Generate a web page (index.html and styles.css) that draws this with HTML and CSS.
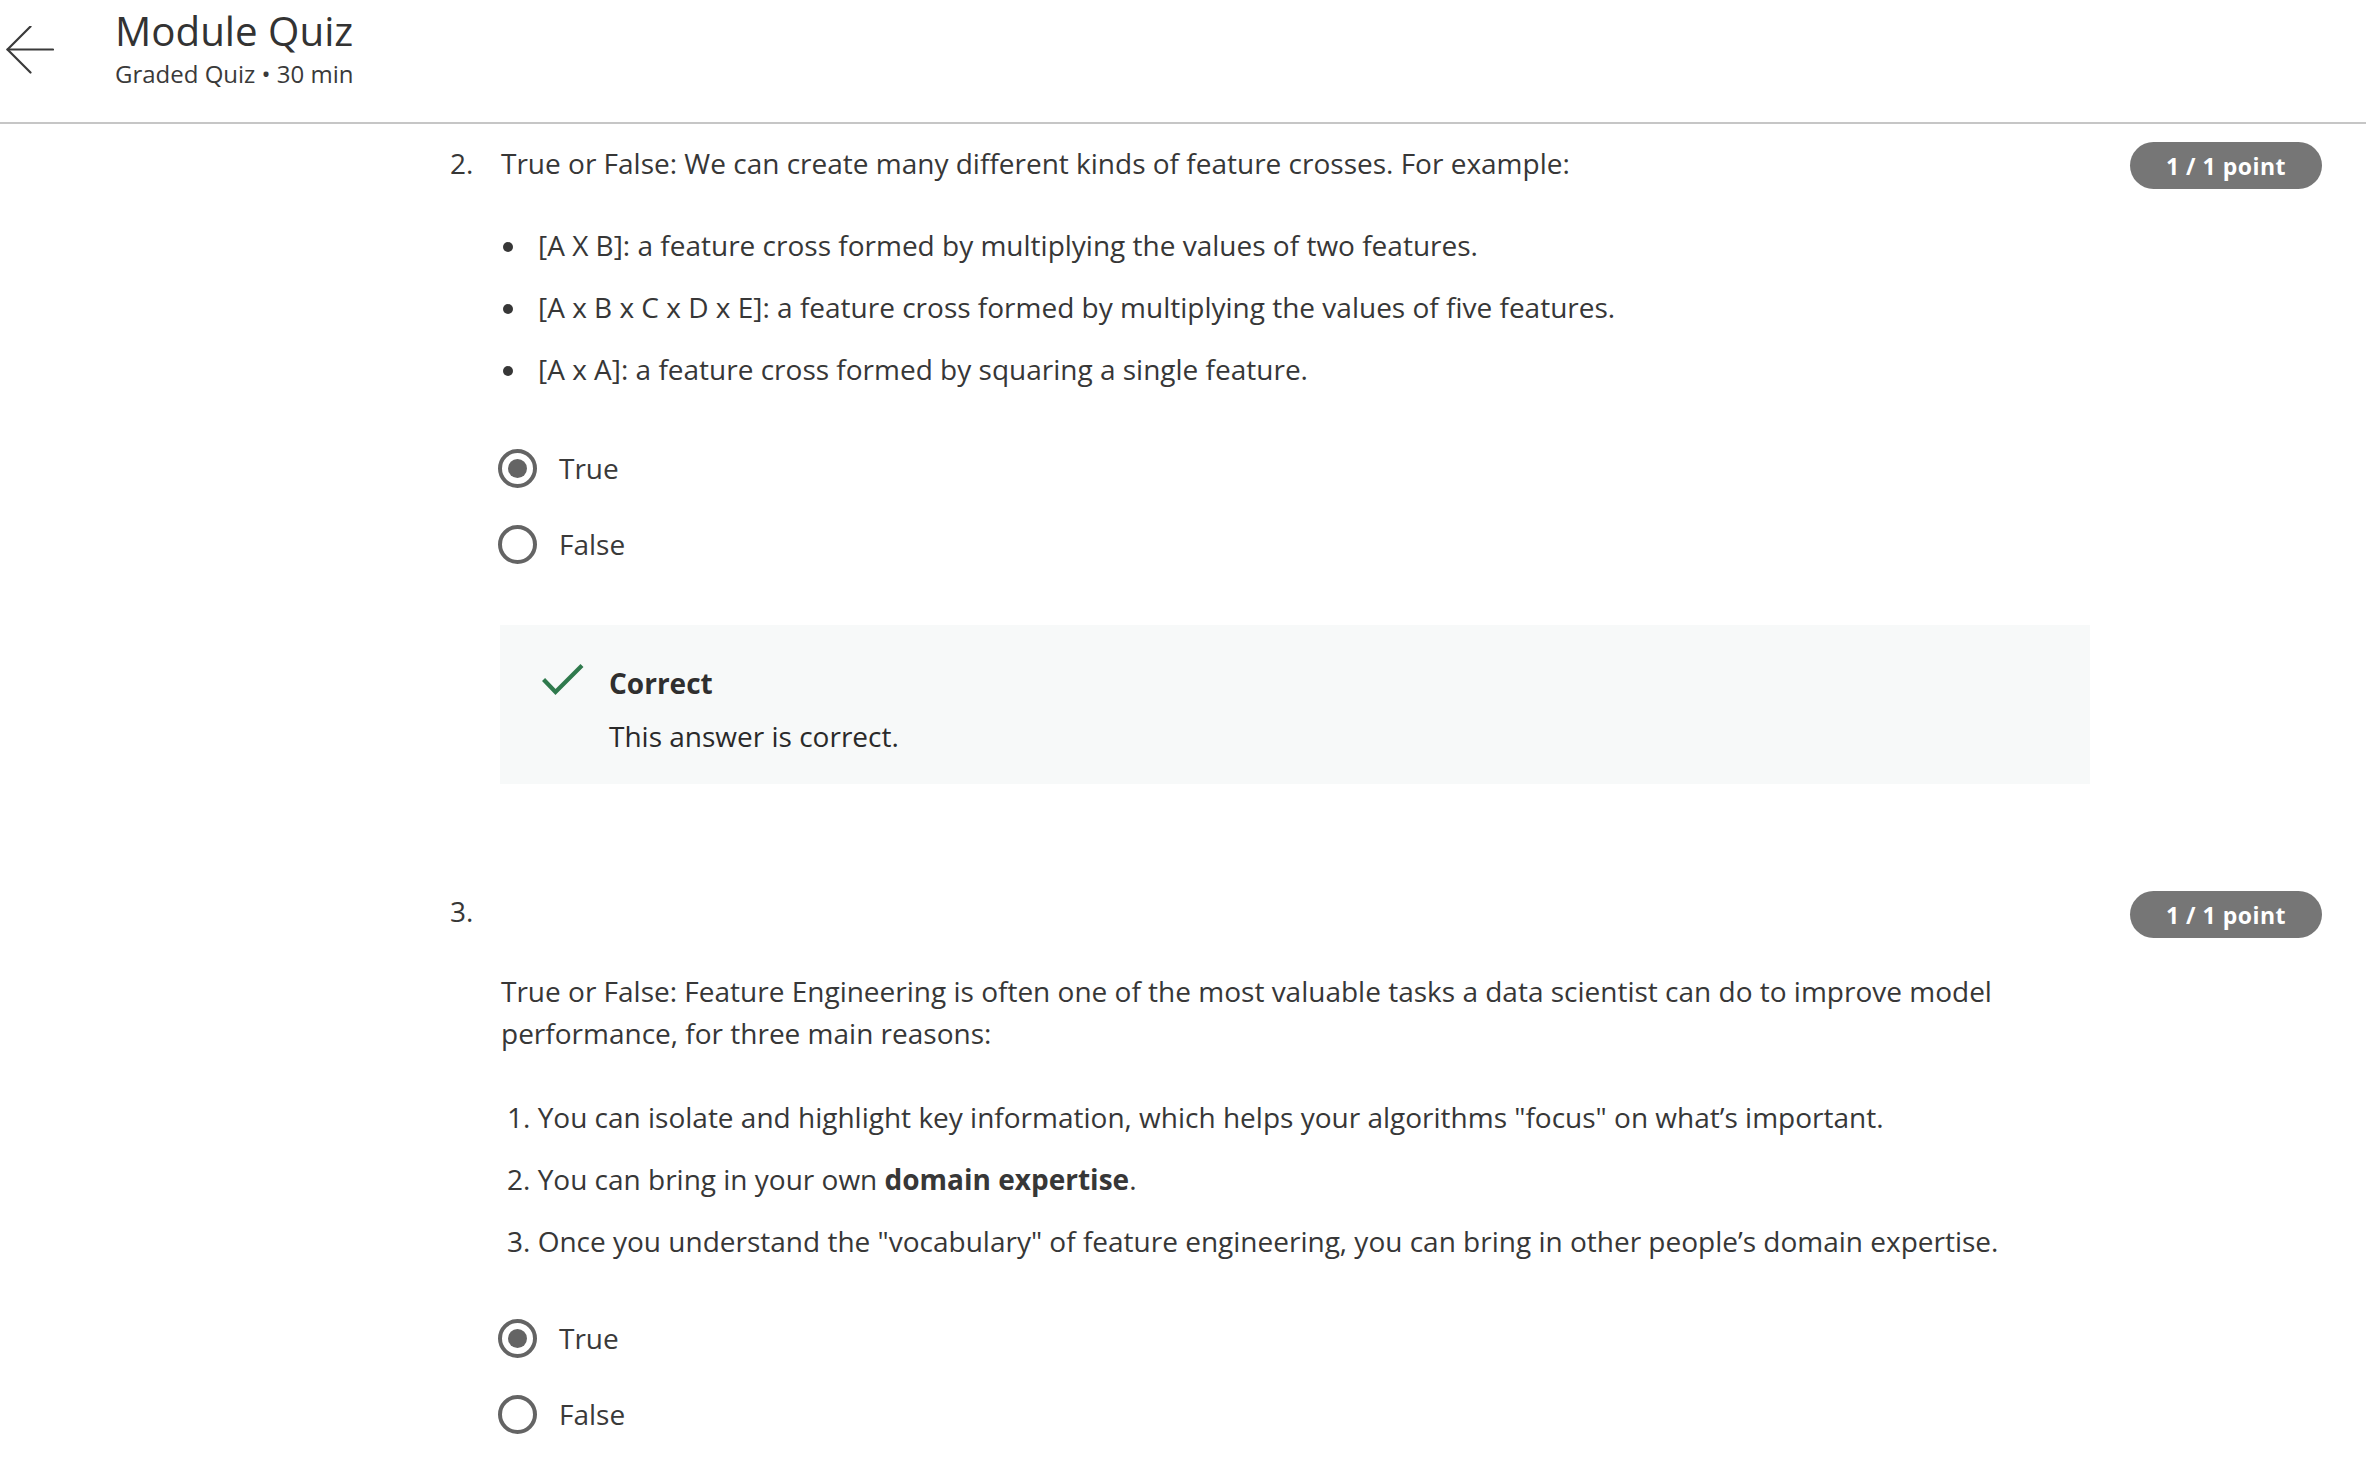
FILE: index.html
```html
<!DOCTYPE html>
<html lang="en">
<head>
<meta charset="utf-8">
<title>Module Quiz</title>
<link rel="stylesheet" href="styles.css">
</head>
<body>
<header class="topbar">
  <button class="back" aria-label="Back">
    <svg width="48" height="48" viewBox="0 0 48 48" fill="none" stroke="#3a3a3a" stroke-width="2.2" stroke-linecap="round" stroke-linejoin="round"><path d="M1.5 23.5 H47"/><path d="M24.5 0.5 L1.5 23.5 L24.5 46.5"/></svg>
  </button>
  <div class="title-block">
    <h1 class="title">Module Quiz</h1>
    <div class="subtitle">Graded Quiz • 30 min</div>
  </div>
</header>

<main class="quiz">
  <section class="question q2">
    <div class="qnum">2.</div>
    <div class="qbody">
      <p class="prompt">True or False: We can create many different kinds of feature crosses. For example:</p>
      <ul class="bullets">
        <li>[A X B]: a feature cross formed by multiplying the values of two features.</li>
        <li>[A x B x C x D x E]: a feature cross formed by multiplying the values of five features.</li>
        <li>[A x A]: a feature cross formed by squaring a single feature.</li>
      </ul>
      <div class="options">
        <label class="option"><span class="radio checked"></span><span class="label">True</span></label>
        <label class="option"><span class="radio"></span><span class="label">False</span></label>
      </div>
      <div class="feedback">
        <svg class="check" width="42" height="32" viewBox="0 0 42 32" fill="none" stroke="#2f7a4d" stroke-width="4.2" stroke-linecap="square"><path d="M3 17 L13.5 28 L38.5 3"/></svg>
        <div class="fb-text">
          <div class="fb-title">Correct</div>
          <div class="fb-msg">This answer is correct.</div>
        </div>
      </div>
    </div>
    <div class="badge">1 / 1 point</div>
  </section>

  <section class="question q3">
    <div class="qnum">3.</div>
    <div class="qbody spaced">
      <p class="prompt">True or False: Feature Engineering is often one of the most valuable tasks a data scientist can do to improve model performance, for three main reasons:</p>
      <ol class="reasons">
        <li>You can isolate and highlight key information, which helps your algorithms "focus" on what’s important.</li>
        <li>You can bring in your own <strong>domain expertise</strong>.</li>
        <li>Once you understand the "vocabulary" of feature engineering, you can bring in other people’s domain expertise.</li>
      </ol>
      <div class="options tight">
        <label class="option"><span class="radio checked"></span><span class="label">True</span></label>
        <label class="option"><span class="radio"></span><span class="label">False</span></label>
      </div>
    </div>
    <div class="badge">1 / 1 point</div>
  </section>
</main>
</body>
</html>
```

FILE: styles.css
```css
* { box-sizing: border-box; }

html, body {
  margin: 0;
  padding: 0;
  background: #ffffff;
}

body {
  font-family: "Open Sans", "Noto Sans", "Liberation Sans", sans-serif;
  color: #373737;
  width: 2366px;
  height: 1472px;
  overflow: hidden;
}

.topbar {
  height: 124px;
  border-bottom: 2px solid #c6c6c6;
  display: flex;
  align-items: flex-start;
}

.back {
  border: 0;
  background: none;
  padding: 0;
  margin: 26px 0 0 6px;
  width: 48px;
  height: 48px;
  cursor: pointer;
}

.back svg { display: block; }

.title-block {
  margin-left: 61px;
  padding-top: 6px;
}

.title {
  margin: 0;
  font-size: 40.3px;
  font-weight: 400;
  line-height: 50px;
  color: #333333;
}

.subtitle {
  margin-top: 2px;
  font-size: 24px;
  line-height: 32px;
  color: #3a3a3a;
}

.quiz {
  padding-top: 18px;
}

.question {
  display: flex;
  align-items: flex-start;
  padding-left: 450px;
  padding-right: 44px;
}

.q3 {
  margin-top: 106px;
}

.qnum {
  width: 51px;
  flex: none;
  font-size: 28px;
  line-height: 42px;
}

.qbody {
  width: 1589px;
  flex: none;
  font-size: 28px;
  line-height: 42px;
}

.qbody.spaced {
  padding-top: 80px;
}

.prompt {
  margin: 0;
}

.bullets {
  list-style: none;
  margin: 40px 0 0;
  padding: 0;
}

.bullets li {
  margin-bottom: 20px;
}

.bullets li:last-child { margin-bottom: 0; }

.bullets li::before {
  content: "";
  display: inline-block;
  width: 10px;
  height: 10px;
  border-radius: 50%;
  background: #373737;
  vertical-align: middle;
  margin: -3px 25px 0 2px;
}

.reasons {
  list-style: decimal inside;
  margin: 42px 0 0;
  padding: 0 0 0 6px;
}

.reasons li {
  margin-bottom: 20px;
}

.reasons li:last-child { margin-bottom: 0; }

.reasons strong {
  font-weight: 700;
}

.options {
  margin-top: 40px;
  display: flex;
  flex-direction: column;
}

.options.tight {
  margin-top: 38px;
}

.option {
  height: 76px;
  display: flex;
  align-items: center;
  cursor: pointer;
}

.radio {
  width: 39px;
  height: 39px;
  border: 4px solid #646464;
  border-radius: 50%;
  margin-left: -3px;
  display: flex;
  align-items: center;
  justify-content: center;
  flex: none;
}

.radio.checked::after {
  content: "";
  width: 19px;
  height: 19px;
  border-radius: 50%;
  background: #646464;
}

.label {
  margin-left: 22px;
  font-size: 28px;
  color: #3a3a3a;
}

.feedback {
  margin-top: 43px;
  background: #f7f9f9;
  display: flex;
  align-items: flex-start;
  padding: 37px 0 27px 42px;
  width: 1590px;
  margin-left: -1px;
}

.check {
  display: block;
  margin-top: 2px;
  flex: none;
}

.fb-text {
  margin-left: 25px;
}

.fb-title {
  font-weight: 700;
  color: #2f2f2f;
}

.fb-msg {
  margin-top: 11px;
  color: #2a2a2a;
}

.badge {
  margin-left: auto;
  width: 192px;
  height: 47px;
  border-radius: 24px;
  background: #767676;
  color: #ffffff;
  font-size: 23px;
  font-weight: 700;
  letter-spacing: 0.5px;
  display: flex;
  align-items: center;
  justify-content: center;
  flex: none;
}

.q3 .badge {
  margin-top: 1px;
}
```
